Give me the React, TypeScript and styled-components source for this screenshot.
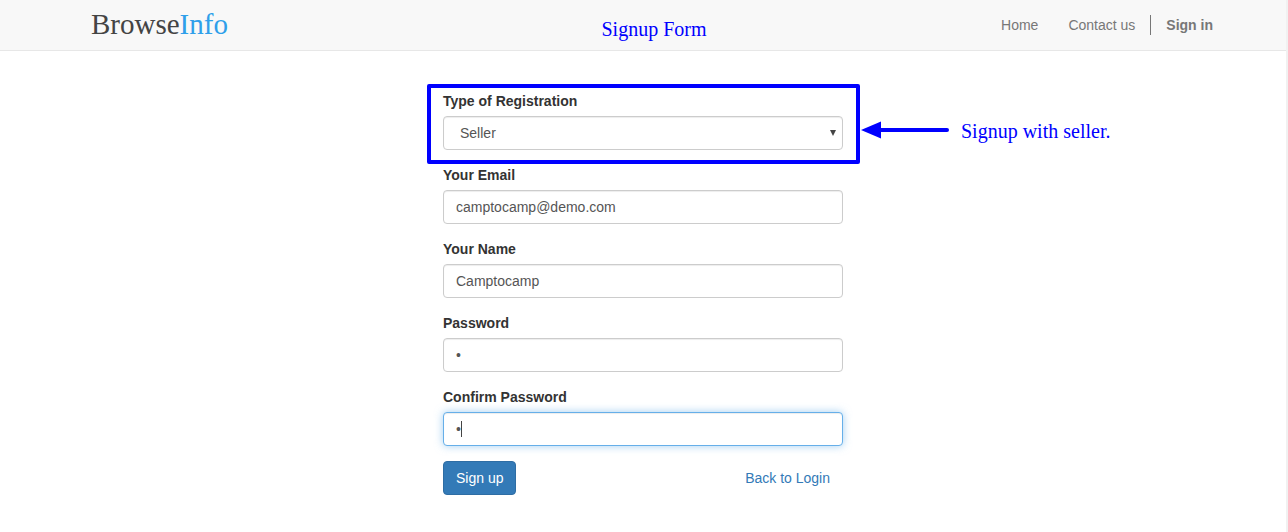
import React from 'react';
import styled, { createGlobalStyle } from 'styled-components';

const Global = createGlobalStyle`
  *, *::before, *::after { box-sizing: border-box; }
  body {
    margin: 0;
    background: #fff;
    color: #333;
    font: 14px/20px "Liberation Sans", Arial, sans-serif;
  }
`;

const Page = styled.div`
  min-height: 100vh;
  border-right: 2px solid #f1f1f1;
`;

const Header = styled.header`
  background: #f8f8f8;
  border-bottom: 1px solid #e7e7e7;
`;

const Bar = styled.div`
  max-width: 1170px;
  min-height: 50px;
  margin: 0 auto;
  padding-left: 22px;
  display: grid;
  grid-template-columns: 1fr auto 1fr;
`;

const Logo = styled.a`
  padding-left: 11px;
  font: 29px/48px "Liberation Serif", serif;
  color: #444;
  text-decoration: none;
  span { color: #2f9fea; }
`;

const Note = styled.span`
  color: #0000ff;
  font: 20px/24px "Liberation Serif", serif;
  white-space: nowrap;
`;

const Title = styled(Note)`
  padding-top: 17px;
`;

const Nav = styled.nav`
  display: flex;
  justify-content: flex-end;
  align-items: center;
`;

const NavLink = styled.a<{ $strong?: boolean }>`
  padding: 0 15px;
  color: #777;
  text-decoration: none;
  font-weight: ${p => (p.$strong ? 700 : 400)};
  border-left: ${p => (p.$strong ? '1px solid #777' : '0')};
`;

const Form = styled.form`
  width: 400px;
  max-width: 100%;
  margin: 40px auto 0;
`;

const Field = styled.div`
  position: relative;
  margin-bottom: 15px;
`;

const Label = styled.label`
  display: block;
  padding-bottom: 5px;
  font-weight: 700;
`;

const control = `
  display: block;
  width: 100%;
  height: 34px;
  padding: 6px 12px;
  border: 1px solid #ccc;
  border-radius: 4px;
  background: #fff;
  color: #555;
  font: 14px/20px "Liberation Sans", Arial, sans-serif;
  box-shadow: inset 0 1px 1px rgba(0, 0, 0, 0.075);
  outline: 0;
`;

const Input = styled.input<{ $active?: boolean }>`
  ${control}
  ${p => p.$active && `
    border-color: #66afe9;
    box-shadow: inset 0 1px 1px rgba(0, 0, 0, 0.075), 0 0 8px rgba(102, 175, 233, 0.6);
  `}
`;

const Select = styled.select`
  ${control}
  appearance: none;
  padding: 6px 16px;
`;

const SelectArrow = styled.svg`
  position: absolute;
  right: 7px;
  bottom: 14px;
  pointer-events: none;
`;

const Caret = styled.span`
  position: absolute;
  left: 18px;
  bottom: 9px;
  width: 1px;
  height: 16px;
  background: #444;
`;

const Highlight = styled.div`
  position: absolute;
  inset: -7px -17px -14px -16px;
  border: 4px solid #0000ff;
  border-radius: 2px;
  pointer-events: none;
`;

const Callout = styled.div`
  position: absolute;
  left: 418px;
  top: 28px;
  display: flex;
  align-items: flex-start;
  gap: 12px;
`;

const Arrow = styled.svg`
  margin-top: 2px;
`;

const Actions = styled.div`
  display: flex;
  justify-content: space-between;
`;

const Button = styled.button`
  padding: 6px 12px;
  border: 1px solid #2e6da4;
  border-radius: 4px;
  background: #337ab7;
  color: #fff;
  font: 14px/20px "Liberation Sans", Arial, sans-serif;
`;

const TextLink = styled.a`
  padding: 7px 13px;
  color: #337ab7;
  text-decoration: none;
`;

export default function App() {
  return (
    <Page>
      <Global />
      <Header>
        <Bar>
          <Logo href="#">Browse<span>Info</span></Logo>
          <Title>Signup Form</Title>
          <Nav>
            <NavLink href="#">Home</NavLink>
            <NavLink href="#">Contact us</NavLink>
            <NavLink href="#" $strong>Sign in</NavLink>
          </Nav>
        </Bar>
      </Header>
      <Form>
        <Field>
          <Label htmlFor="type">Type of Registration</Label>
          <Select id="type" defaultValue="Seller">
            <option>Seller</option>
            <option>Customer</option>
          </Select>
          <SelectArrow width="6" height="6" viewBox="0 0 6 6"><path d="M0 0h6L3 6z" fill="#444" /></SelectArrow>
          <Highlight />
          <Callout>
            <Arrow width="88" height="18" viewBox="0 0 88 18">
              <path d="M0 9L20 0.5V17.5Z" fill="#00f" />
              <path d="M18 9H86" stroke="#00f" strokeWidth="4" strokeLinecap="round" />
            </Arrow>
            <Note>Signup with seller.</Note>
          </Callout>
        </Field>
        <Field>
          <Label htmlFor="email">Your Email</Label>
          <Input id="email" type="email" defaultValue="camptocamp@demo.com" />
        </Field>
        <Field>
          <Label htmlFor="name">Your Name</Label>
          <Input id="name" type="text" defaultValue="Camptocamp" />
        </Field>
        <Field>
          <Label htmlFor="password">Password</Label>
          <Input id="password" type="password" defaultValue="a" />
        </Field>
        <Field>
          <Label htmlFor="confirm">Confirm Password</Label>
          <Input id="confirm" type="password" defaultValue="a" $active />
          <Caret />
        </Field>
        <Actions>
          <Button type="button">Sign up</Button>
          <TextLink href="#">Back to Login</TextLink>
        </Actions>
      </Form>
    </Page>
  );
}
